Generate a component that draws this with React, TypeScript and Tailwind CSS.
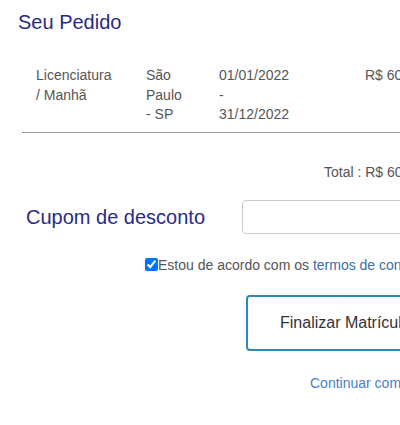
import { useState } from "react";

const rows = [
  { curso: "Licenciatura / Manhã", local: "São Paulo - SP", periodo: "01/01/2022 - 31/12/2022", valor: "R$ 600,00" },
];

const App = () => {
  const [aceito, setAceito] = useState(true);

  return (
    <div className="w-full overflow-hidden bg-white font-['Liberation_Sans',Arial,sans-serif]">
      <div className="w-[560px]">
        <h2 className="pl-[18px] pt-[10px] text-[20px] leading-[24px] text-[#2a2a86]">Seu Pedido</h2>

        {/* resumo do pedido */}
        <div className="ml-[22px] mt-[32px] border-b border-[#9a9a9a] text-[14px] leading-[19.5px] text-[#555]">
          {rows.map((r) => (
            <div key={r.curso} className="flex pb-[7px] pl-[14px]">
              <div className="w-[110px]">
                <div className="w-[80px]">{r.curso}</div>
              </div>
              <div className="w-[73px]">
                <div className="w-[44px]">{r.local}</div>
              </div>
              <div className="w-[146px]">
                <div className="w-[76px]">{r.periodo}</div>
              </div>
              <div className="flex-1">{r.valor}</div>
            </div>
          ))}
        </div>

        <div className="mt-[31px] pl-[324px] text-[14px] leading-[16px] text-[#555]">Total : R$ 600,00</div>

        {/* cupom */}
        <div className="mt-[20px] flex items-center">
          <label className="w-[242px] pl-[26px] text-[20px] leading-[24px] text-[#2a2a86]">Cupom de desconto</label>
          <input
            type="text"
            className="h-[34px] w-[300px] rounded-[4px] border border-[#ccc] px-3 text-[14px] outline-none"
          />
        </div>

        <label className="mt-[22px] flex items-center pl-[145px] text-[14px] leading-[18px] text-[#555]">
          <input
            type="checkbox"
            checked={aceito}
            onChange={(e) => setAceito(e.target.checked)}
            className="m-0 h-[13px] w-[13px]"
          />
          <span>
            Estou de acordo com os <a href="#" className="text-[#3a6ea5]">termos de contrato</a>
          </span>
        </label>

        <div className="mt-[21px] pl-[246px]">
          <button className="h-[56px] rounded-[4px] border-2 border-[#2e88bd] bg-white px-[32px] text-[16px] text-[#333]">
            Finalizar Matrícula
          </button>
        </div>

        <div className="mt-[23px] pb-[30px] pl-[310px] text-[14px] leading-[18px]">
          <a href="#" className="text-[#4a80c4]">Continuar comprando</a>
        </div>
      </div>
    </div>
  );
};

export default App;
